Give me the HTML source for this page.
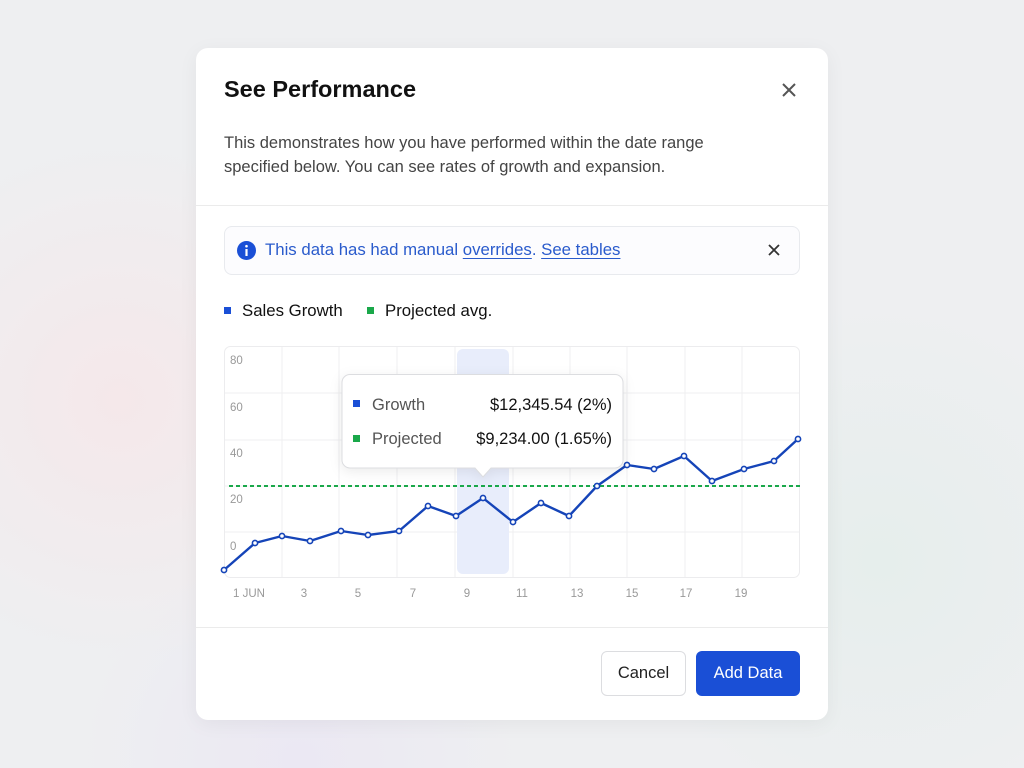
<!DOCTYPE html>
<html><head><meta charset="utf-8"><style>
*{box-sizing:border-box;margin:0;padding:0}
body{width:1024px;height:768px;overflow:hidden;font-family:"Liberation Sans",sans-serif;background:#eeeff1;position:relative}
.bg{position:absolute;inset:0;background:radial-gradient(circle at 120px 400px,#f5e8ea 0,rgba(245,232,234,0) 260px),radial-gradient(circle at 880px 560px,#e6eeec 0,rgba(230,238,236,0) 260px),radial-gradient(circle at 300px 760px,#ebe8f3 0,rgba(235,232,243,0) 220px)}
.modal{position:absolute;left:196px;top:48px;width:632px;height:672px;background:#fff;border-radius:12px;box-shadow:0 4px 20px rgba(0,0,0,.05)}
.abs{position:absolute}
</style></head><body>
<div class="bg"></div>
<div class="modal">
<div class="abs" style="left:28px;top:28px;font-size:23.5px;font-weight:bold;color:#111">See Performance</div>
<svg class="abs" style="left:586px;top:35px" width="14" height="14"><path d="M1 1L13 13M13 1L1 13" stroke="#555" stroke-width="2"/></svg>
<div class="abs" style="left:28px;top:84px;width:510px;font-size:16.5px;line-height:23.5px;color:#444">This demonstrates how you have performed within the date range specified below. You can see rates of growth and expansion.</div>
<div class="abs" style="left:0;top:157px;width:632px;height:1px;background:#ebebeb"></div>
<div class="abs" style="left:28px;top:178px;width:576px;height:49px;border:1px solid #e8eaee;border-radius:8px;background:#fcfcfe"></div>
<svg class="abs" style="left:41px;top:193px" width="19" height="19"><circle cx="9.5" cy="9.5" r="9.5" fill="#1a4fd6"/><rect x="8.4" y="8" width="2.2" height="7" fill="#fff"/><circle cx="9.5" cy="5.2" r="1.3" fill="#fff"/></svg>
<div class="abs" style="left:69px;top:192px;font-size:16.8px;color:#2a5bcc">This data has had manual <span style="text-decoration:underline;text-underline-offset:3px">overrides</span>. <span style="text-decoration:underline;text-underline-offset:3px">See tables</span></div>
<svg class="abs" style="left:572px;top:196px" width="12" height="12"><path d="M1 1L11 11M11 1L1 11" stroke="#333" stroke-width="1.8"/></svg>
<div class="abs" style="left:28px;top:259px;width:7px;height:7px;background:#1a4fd6"></div>
<div class="abs" style="left:46px;top:253px;font-size:16.8px;color:#111">Sales Growth</div>
<div class="abs" style="left:171px;top:259px;width:7px;height:7px;background:#1aa84a"></div>
<div class="abs" style="left:189px;top:253px;font-size:16.8px;color:#111">Projected avg.</div>
<div class="abs" style="left:0;top:579px;width:632px;height:1px;background:#ebebeb"></div>
<div class="abs" style="left:405px;top:603px;width:85px;height:45px;border:1px solid #dcdde0;border-radius:6px;font-size:16.5px;color:#222;text-align:center;line-height:43px">Cancel</div>
<div class="abs" style="left:500px;top:603px;width:104px;height:45px;background:#1a4fd6;border-radius:6px;font-size:16.5px;color:#fff;text-align:center;line-height:45px">Add Data</div>
</div>
<svg class="abs" style="left:0;top:0" width="1024" height="768" font-family="Liberation Sans, sans-serif">
<rect x="224.5" y="346.5" width="575" height="231" rx="6" fill="none" stroke="#ececee"/>
<g stroke="#efeff1">
<path d="M282 347V577M339 347V577M397 347V577M455 347V577M513 347V577M570 347V577M627 347V577M685 347V577M742 347V577"/>
<path d="M225 393H799M225 440H799M225 486H799M225 532H799"/>
</g>
<rect x="457" y="349" width="52" height="225" rx="6" fill="#e8edfb"/>
<g font-size="11.5" fill="#999">
<text x="230" y="364">80</text><text x="230" y="411">60</text><text x="230" y="457">40</text><text x="230" y="503">20</text><text x="230" y="550">0</text>
</g>
<g font-size="11.5" fill="#999" text-anchor="middle">
<text x="249" y="597">1 JUN</text><text x="304" y="597">3</text><text x="358" y="597">5</text><text x="413" y="597">7</text><text x="467" y="597">9</text><text x="522" y="597">11</text><text x="577" y="597">13</text><text x="632" y="597">15</text><text x="686" y="597">17</text><text x="741" y="597">19</text>
</g>
<path d="M229 486H800" stroke="#1aa84a" stroke-width="2" stroke-dasharray="4 3"/>
<polyline fill="none" stroke="#1544b8" stroke-width="2.4" stroke-linejoin="round" points="224,570 255,543 282,536 310,541 341,531 368,535 399,531 428,506 456,516 483,498 513,522 541,503 569,516 597,486 627,465 654,469 684,456 712,481 744,469 774,461 798,439"/>
<g fill="#fff" stroke="#1544b8" stroke-width="1.6">
<circle cx="224" cy="570" r="2.6"/><circle cx="255" cy="543" r="2.6"/><circle cx="282" cy="536" r="2.6"/><circle cx="310" cy="541" r="2.6"/><circle cx="341" cy="531" r="2.6"/><circle cx="368" cy="535" r="2.6"/><circle cx="399" cy="531" r="2.6"/><circle cx="428" cy="506" r="2.6"/><circle cx="456" cy="516" r="2.6"/><circle cx="483" cy="498" r="2.6"/><circle cx="513" cy="522" r="2.6"/><circle cx="541" cy="503" r="2.6"/><circle cx="569" cy="516" r="2.6"/><circle cx="597" cy="486" r="2.6"/><circle cx="627" cy="465" r="2.6"/><circle cx="654" cy="469" r="2.6"/><circle cx="684" cy="456" r="2.6"/><circle cx="712" cy="481" r="2.6"/><circle cx="744" cy="469" r="2.6"/><circle cx="774" cy="461" r="2.6"/><circle cx="798" cy="439" r="2.6"/>
</g>
<path d="M350 374.5H615a8 8 0 0 1 8 8V460a8 8 0 0 1-8 8H491l-8 9l-8-9H350a8 8 0 0 1-8-8V382.5a8 8 0 0 1 8-8z" fill="#fff" stroke="#dcdde0" style="filter:drop-shadow(0 3px 6px rgba(0,0,0,.08))"/>
<rect x="353" y="400" width="7" height="7" fill="#1a4fd6"/>
<rect x="353" y="435" width="7" height="7" fill="#1aa84a"/>
<g font-size="16.5"><text x="372" y="410" fill="#555">Growth</text><text x="372" y="444" fill="#555">Projected</text>
<text x="612" y="410" fill="#111" text-anchor="end">$12,345.54 (2%)</text><text x="612" y="444" fill="#111" text-anchor="end">$9,234.00 (1.65%)</text></g>
</svg>
</body></html>
